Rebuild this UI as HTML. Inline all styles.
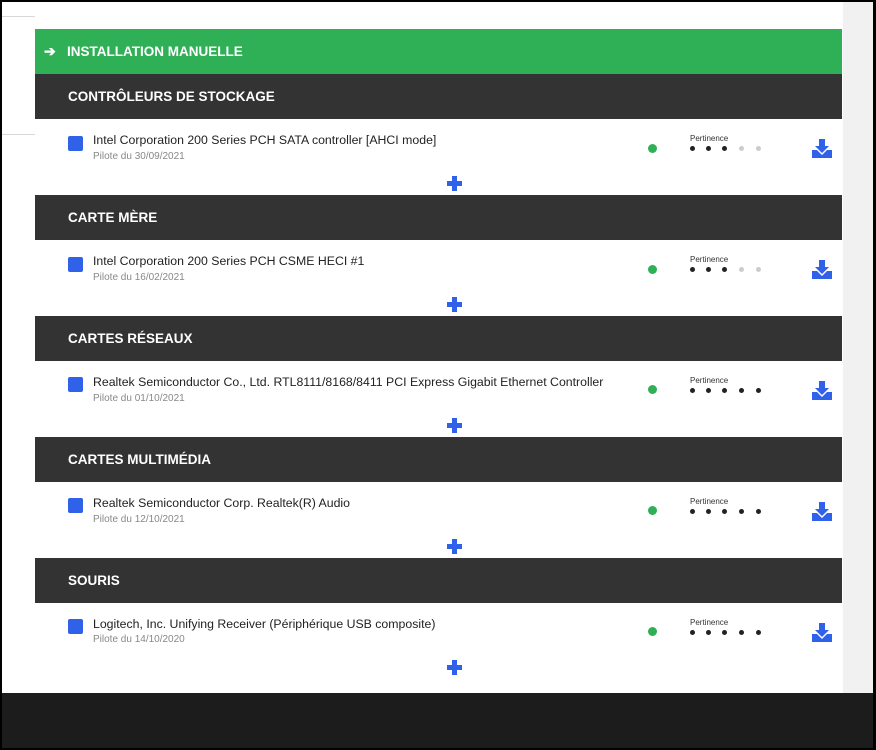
<!DOCTYPE html>
<html><head><meta charset="utf-8"><style>
*{margin:0;padding:0;box-sizing:border-box}
body{width:876px;height:750px;background:#000;position:relative;overflow:hidden;font-family:"Liberation Sans",sans-serif}
.page{position:absolute;left:2px;top:2px;width:871px;height:691px;background:#fff}
.strip{position:absolute;left:843px;top:2px;width:30px;height:691px;background:#f1f1f1}
.bottom{position:absolute;left:2px;top:693px;width:871px;height:55px;background:#1c1c1c}
.ln{position:absolute;left:2px;width:33px;height:1px;background:#d8d8d8}
.green{position:absolute;left:35px;top:29px;width:807px;height:45px;background:#2fb056;color:#fff;font-weight:600;font-size:13.5px;line-height:45px;padding-left:32px}
.arr{position:absolute;left:9px;top:0;font-size:14px}
.hd{position:absolute;left:35px;width:807px;height:45px;background:#333;color:#fff;font-weight:600;font-size:13.5px;line-height:45px;padding-left:33px}
.cb{position:absolute;left:68px;width:15px;height:15px;background:#2f62e8;border-radius:2px}
.t{position:absolute;left:93px;font-size:12.3px;color:#222;white-space:nowrap}
.d{position:absolute;left:93px;font-size:10px;color:#888}
.gd{position:absolute;left:648px;width:9px;height:9px;border-radius:50%;background:#2fb056}
.p{position:absolute;left:690px;font-size:8px;color:#333}
.dot{position:absolute;width:5px;height:5px;border-radius:50%;background:#222}
.dot.l{background:#ccc}
.plus{position:absolute;left:447px;width:15px;height:15px}
.plus:before{content:"";position:absolute;left:5px;top:0;width:5px;height:15px;background:#2f62e8}
.plus:after{content:"";position:absolute;left:0;top:5px;width:15px;height:5px;background:#2f62e8}
.dl{position:absolute;left:812px}
</style></head><body>
<div class="page"></div><div class="strip"></div>
<div class="ln" style="top:16px"></div><div class="ln" style="top:134px"></div>
<div class="green"><span class="arr">➔</span>INSTALLATION MANUELLE</div>

<div class="hd" style="top:74px">CONTRÔLEURS DE STOCKAGE</div>
<div class="cb" style="top:136px"></div>
<div class="t" style="top:133px">Intel Corporation 200 Series PCH SATA controller [AHCI mode]</div>
<div class="d" style="top:151px">Pilote du 30/09/2021</div>
<div class="gd" style="top:144px"></div>
<div class="p" style="top:134px">Pertinence</div>
<div class="dot" style="left:690px;top:146px"></div><div class="dot" style="left:706px;top:146px"></div><div class="dot" style="left:722px;top:146px"></div><div class="dot l" style="left:739px;top:146px"></div><div class="dot l" style="left:756px;top:146px"></div>
<svg class="dl" style="top:139px" width="20" height="19" viewBox="0 0 20 19"><path d="M7 0h6v7h4l-7 7-7-7h4z" fill="#2f62e8"/><path d="M0 11h5l5 5 5-5h5v8H0z" fill="#2f62e8"/></svg>
<div class="plus" style="top:176px"></div>

<div class="hd" style="top:195px">CARTE MÈRE</div>
<div class="cb" style="top:257px"></div>
<div class="t" style="top:254px">Intel Corporation 200 Series PCH CSME HECI #1</div>
<div class="d" style="top:272px">Pilote du 16/02/2021</div>
<div class="gd" style="top:265px"></div>
<div class="p" style="top:255px">Pertinence</div>
<div class="dot" style="left:690px;top:267px"></div><div class="dot" style="left:706px;top:267px"></div><div class="dot" style="left:722px;top:267px"></div><div class="dot l" style="left:739px;top:267px"></div><div class="dot l" style="left:756px;top:267px"></div>
<svg class="dl" style="top:260px" width="20" height="19" viewBox="0 0 20 19"><path d="M7 0h6v7h4l-7 7-7-7h4z" fill="#2f62e8"/><path d="M0 11h5l5 5 5-5h5v8H0z" fill="#2f62e8"/></svg>
<div class="plus" style="top:297px"></div>

<div class="hd" style="top:316px">CARTES RÉSEAUX</div>
<div class="cb" style="top:377px"></div>
<div class="t" style="top:375px">Realtek Semiconductor Co., Ltd. RTL8111/8168/8411 PCI Express Gigabit Ethernet Controller</div>
<div class="d" style="top:393px">Pilote du 01/10/2021</div>
<div class="gd" style="top:385px"></div>
<div class="p" style="top:376px">Pertinence</div>
<div class="dot" style="left:690px;top:388px"></div><div class="dot" style="left:706px;top:388px"></div><div class="dot" style="left:722px;top:388px"></div><div class="dot" style="left:739px;top:388px"></div><div class="dot" style="left:756px;top:388px"></div>
<svg class="dl" style="top:381px" width="20" height="19" viewBox="0 0 20 19"><path d="M7 0h6v7h4l-7 7-7-7h4z" fill="#2f62e8"/><path d="M0 11h5l5 5 5-5h5v8H0z" fill="#2f62e8"/></svg>
<div class="plus" style="top:418px"></div>

<div class="hd" style="top:437px">CARTES MULTIMÉDIA</div>
<div class="cb" style="top:498px"></div>
<div class="t" style="top:496px">Realtek Semiconductor Corp. Realtek(R) Audio</div>
<div class="d" style="top:514px">Pilote du 12/10/2021</div>
<div class="gd" style="top:506px"></div>
<div class="p" style="top:497px">Pertinence</div>
<div class="dot" style="left:690px;top:509px"></div><div class="dot" style="left:706px;top:509px"></div><div class="dot" style="left:722px;top:509px"></div><div class="dot" style="left:739px;top:509px"></div><div class="dot" style="left:756px;top:509px"></div>
<svg class="dl" style="top:502px" width="20" height="19" viewBox="0 0 20 19"><path d="M7 0h6v7h4l-7 7-7-7h4z" fill="#2f62e8"/><path d="M0 11h5l5 5 5-5h5v8H0z" fill="#2f62e8"/></svg>
<div class="plus" style="top:539px"></div>

<div class="hd" style="top:558px">SOURIS</div>
<div class="cb" style="top:619px"></div>
<div class="t" style="top:617px">Logitech, Inc. Unifying Receiver (Périphérique USB composite)</div>
<div class="d" style="top:634px">Pilote du 14/10/2020</div>
<div class="gd" style="top:627px"></div>
<div class="p" style="top:618px">Pertinence</div>
<div class="dot" style="left:690px;top:630px"></div><div class="dot" style="left:706px;top:630px"></div><div class="dot" style="left:722px;top:630px"></div><div class="dot" style="left:739px;top:630px"></div><div class="dot" style="left:756px;top:630px"></div>
<svg class="dl" style="top:623px" width="20" height="19" viewBox="0 0 20 19"><path d="M7 0h6v7h4l-7 7-7-7h4z" fill="#2f62e8"/><path d="M0 11h5l5 5 5-5h5v8H0z" fill="#2f62e8"/></svg>
<div class="plus" style="top:660px"></div>

<div class="bottom"></div>
</body></html>
